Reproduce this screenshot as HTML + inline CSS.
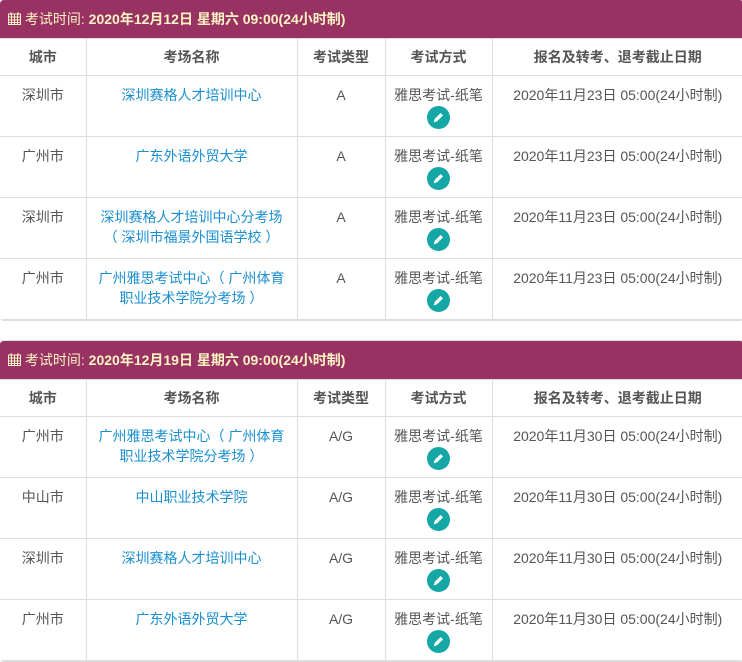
<!DOCTYPE html>
<html><head><meta charset="utf-8"><style>
*{margin:0;padding:0;box-sizing:border-box}
body{width:742px;height:661px;background:#fff;font-family:"Liberation Sans","Noto Sans CJK SC",sans-serif;font-size:14px;color:#555;overflow:hidden}
.blk{position:absolute;left:0;width:744px;border:1px solid #ddd;border-radius:4px;overflow:hidden}
.bar{height:38px;background:#973263;color:#fff3c4;font-size:14px;line-height:38px;padding-left:8px;font-weight:bold}
.bar span{font-weight:normal}
table{border-collapse:collapse;width:744px;table-layout:fixed}
td,th{border:1px solid #ddd;text-align:center;vertical-align:top;line-height:20px}
th{height:37px;padding-top:8px;font-weight:bold;color:#555}
td{height:61px;padding-top:9px}
tr>*:first-child{border-left:none}
a{color:#1a8fd0;text-decoration:none}
.ic{display:inline-block;width:23px;height:23px;border-radius:50%;background:#15a6a6;margin-top:1px;vertical-align:top;position:relative}
.ic svg{position:absolute;left:5px;top:5px}
</style></head><body>
<div class="blk" style="top:0;border-top:none;border-left:none">
<div class="bar"><svg width="13" height="13" viewBox="0 0 13 13" style="vertical-align:-1px"><rect x="0.5" y="2" width="12" height="10.5" fill="none" stroke="#fff3c4"/><path d="M0 5h13M0 8h13M0 10.5h13M3.5 2v11M6.5 2v11M9.5 2v11M3 0v3M10 0v3" stroke="#fff3c4"/></svg> <span>考试时间:</span> 2020年12月12日 星期六 09:00(24小时制)</div>
<table><colgroup><col style="width:86px"><col style="width:211px"><col style="width:88px"><col style="width:107px"><col></colgroup>
<tr><th>城市</th><th>考场名称</th><th>考试类型</th><th>考试方式</th><th>报名及转考、退考截止日期</th></tr>
<tr><td>深圳市</td><td><a>深圳赛格人才培训中心</a></td><td>A</td><td>雅思考试-纸笔<br><i class="ic"><svg width="13" height="13" viewBox="0 0 12 12"><path d="M1.5 10.5l1-3.2 5.5-5.5 2.2 2.2-5.5 5.5z" fill="#fff"/></svg></i></td><td>2020年11月23日 05:00(24小时制)</td></tr>
<tr><td>广州市</td><td><a>广东外语外贸大学</a></td><td>A</td><td>雅思考试-纸笔<br><i class="ic"><svg width="13" height="13" viewBox="0 0 12 12"><path d="M1.5 10.5l1-3.2 5.5-5.5 2.2 2.2-5.5 5.5z" fill="#fff"/></svg></i></td><td>2020年11月23日 05:00(24小时制)</td></tr>
<tr><td>深圳市</td><td><a>深圳赛格人才培训中心分考场<br>（ 深圳市福景外国语学校 ）</a></td><td>A</td><td>雅思考试-纸笔<br><i class="ic"><svg width="13" height="13" viewBox="0 0 12 12"><path d="M1.5 10.5l1-3.2 5.5-5.5 2.2 2.2-5.5 5.5z" fill="#fff"/></svg></i></td><td>2020年11月23日 05:00(24小时制)</td></tr>
<tr><td>广州市</td><td><a>广州雅思考试中心（ 广州体育<br>职业技术学院分考场 ）</a></td><td>A</td><td>雅思考试-纸笔<br><i class="ic"><svg width="13" height="13" viewBox="0 0 12 12"><path d="M1.5 10.5l1-3.2 5.5-5.5 2.2 2.2-5.5 5.5z" fill="#fff"/></svg></i></td><td>2020年11月23日 05:00(24小时制)</td></tr>
</table></div>
<div class="blk" style="top:340px;border-left:none">
<div class="bar"><svg width="13" height="13" viewBox="0 0 13 13" style="vertical-align:-1px"><rect x="0.5" y="2" width="12" height="10.5" fill="none" stroke="#fff3c4"/><path d="M0 5h13M0 8h13M0 10.5h13M3.5 2v11M6.5 2v11M9.5 2v11M3 0v3M10 0v3" stroke="#fff3c4"/></svg> <span>考试时间:</span> 2020年12月19日 星期六 09:00(24小时制)</div>
<table><colgroup><col style="width:86px"><col style="width:211px"><col style="width:88px"><col style="width:107px"><col></colgroup>
<tr><th>城市</th><th>考场名称</th><th>考试类型</th><th>考试方式</th><th>报名及转考、退考截止日期</th></tr>
<tr><td>广州市</td><td><a>广州雅思考试中心（ 广州体育<br>职业技术学院分考场 ）</a></td><td>A/G</td><td>雅思考试-纸笔<br><i class="ic"><svg width="13" height="13" viewBox="0 0 12 12"><path d="M1.5 10.5l1-3.2 5.5-5.5 2.2 2.2-5.5 5.5z" fill="#fff"/></svg></i></td><td>2020年11月30日 05:00(24小时制)</td></tr>
<tr><td>中山市</td><td><a>中山职业技术学院</a></td><td>A/G</td><td>雅思考试-纸笔<br><i class="ic"><svg width="13" height="13" viewBox="0 0 12 12"><path d="M1.5 10.5l1-3.2 5.5-5.5 2.2 2.2-5.5 5.5z" fill="#fff"/></svg></i></td><td>2020年11月30日 05:00(24小时制)</td></tr>
<tr><td>深圳市</td><td><a>深圳赛格人才培训中心</a></td><td>A/G</td><td>雅思考试-纸笔<br><i class="ic"><svg width="13" height="13" viewBox="0 0 12 12"><path d="M1.5 10.5l1-3.2 5.5-5.5 2.2 2.2-5.5 5.5z" fill="#fff"/></svg></i></td><td>2020年11月30日 05:00(24小时制)</td></tr>
<tr><td>广州市</td><td><a>广东外语外贸大学</a></td><td>A/G</td><td>雅思考试-纸笔<br><i class="ic"><svg width="13" height="13" viewBox="0 0 12 12"><path d="M1.5 10.5l1-3.2 5.5-5.5 2.2 2.2-5.5 5.5z" fill="#fff"/></svg></i></td><td>2020年11月30日 05:00(24小时制)</td></tr>
</table></div>
</body></html>
